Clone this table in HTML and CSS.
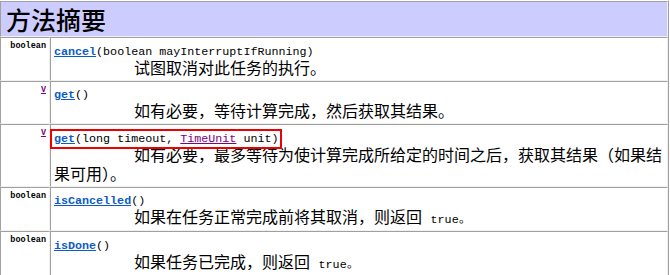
FILE: index.html
```html
<!DOCTYPE html>
<html lang="zh-CN">
<head>
<meta charset="utf-8">
<title>方法摘要</title>
<link rel="stylesheet" href="styles.css">
</head>
<body>
<table class="summary">
  <tr class="head">
    <th colspan="2">方法摘要</th>
  </tr>
  <tr>
    <td class="type"><code class="tiny">boolean</code></td>
    <td class="method">
      <div class="sig"><a class="name" href="#">cancel</a>(boolean mayInterruptIfRunning)</div>
      <div class="desc">试图取消对此任务的执行。</div>
    </td>
  </tr>
  <tr>
    <td class="type"><a class="tiny tparam" href="#">V</a></td>
    <td class="method">
      <div class="sig"><a class="name" href="#">get</a>()</div>
      <div class="desc">如有必要，等待计算完成，然后获取其结果。</div>
    </td>
  </tr>
  <tr>
    <td class="type"><a class="tiny tparam" href="#">V</a></td>
    <td class="method">
      <div class="sig"><span class="marked"><a class="name" href="#">get</a>(long timeout, <a class="cls" href="#">TimeUnit</a> unit)</span></div>
      <div class="desc">如有必要，最多等待为使计算完成所给定的时间之后，获取其结果（如果结果可用）。</div>
    </td>
  </tr>
  <tr>
    <td class="type"><code class="tiny">boolean</code></td>
    <td class="method">
      <div class="sig"><a class="name" href="#">isCancelled</a>()</div>
      <div class="desc">如果在任务正常完成前将其取消，则返回 <code class="lit">true。</code></div>
    </td>
  </tr>
  <tr>
    <td class="type"><code class="tiny">boolean</code></td>
    <td class="method">
      <div class="sig"><a class="name" href="#">isDone</a>()</div>
      <div class="desc">如果任务已完成，则返回 <code class="lit">true。</code></div>
    </td>
  </tr>
</table>
</body>
</html>
```

FILE: styles.css
```css
html, body {
  margin: 0;
  padding: 0;
  background: #ffffff;
}

.summary {
  border-collapse: separate;
  border-spacing: 0;
  width: 670px;
  margin-left: -1px;
  border: 1px solid;
  border-color: #ffffff #a0a0a0 #a0a0a0 #ffffff;
}

.summary th,
.summary td {
  border: 1px solid;
  border-color: #a0a0a0 #f0f0f0 #f0f0f0 #a0a0a0;
  padding: 3px;
  vertical-align: top;
}

.head th {
  background: #ccccff;
  text-align: left;
  padding-left: 5px;
  font: 500 25px/28px "Noto Sans CJK SC", sans-serif;
  color: #000000;
}

.type {
  width: 42px;
  text-align: right;
  font: 9px/11px "Liberation Mono", monospace;
}

.tiny {
  font: bold 8.5px/11px "Liberation Mono", monospace;
  color: #000000;
}

.tparam {
  color: #800080;
  text-decoration: underline;
}

.method {
  color: #000000;
}

.sig {
  font: 11.7px/12px "Liberation Mono", monospace;
  padding-top: 4.5px;
}

.name {
  font-weight: bold;
  color: #0a5cc8;
  text-decoration: underline;
}

.cls {
  color: #800080;
  text-decoration: underline;
}

.marked {
  margin-left: -1px;
  padding: 0 1px;
  outline: 2px solid #ee0000;
  outline-offset: 1px;
}

.desc {
  font: 16px/19px "Noto Sans CJK SC", sans-serif;
  text-indent: 80px;
}

.lit {
  font: 11.7px "Liberation Mono", monospace;
  margin-left: 5px;
}
```
